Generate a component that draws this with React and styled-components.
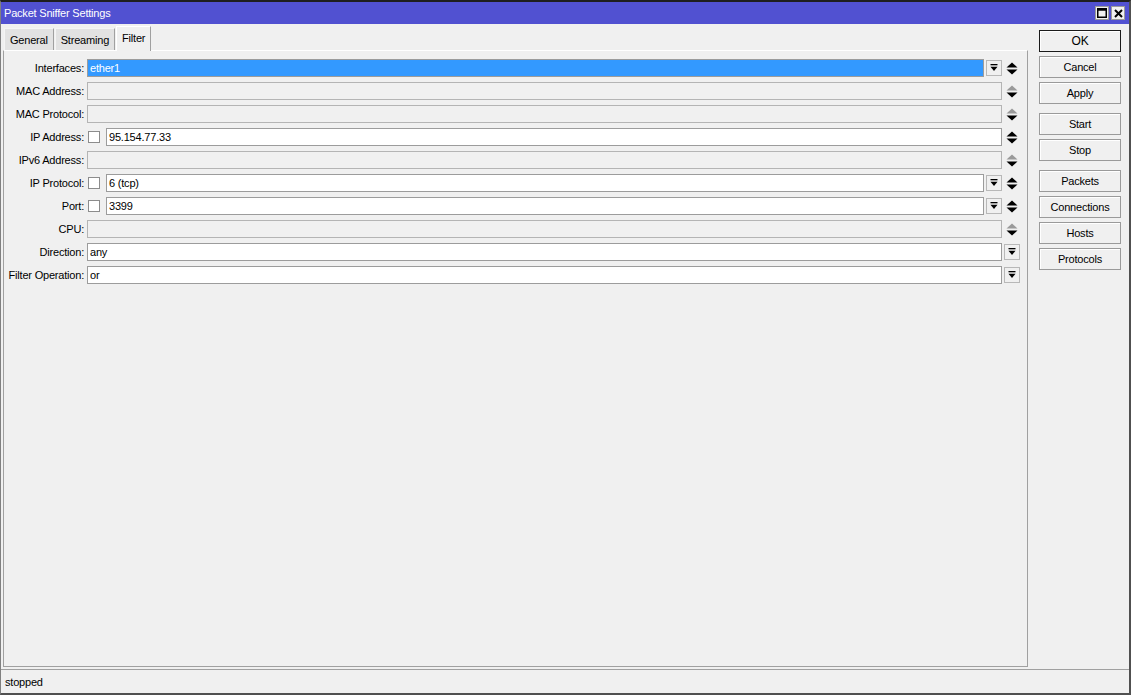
import React from "react";
import styled, { createGlobalStyle } from "styled-components";

const GlobalStyle = createGlobalStyle`
  html, body {
    margin: 0;
    padding: 0;
    background: #ffffff;
  }
  body {
    font-family: "Liberation Sans", Arial, sans-serif;
    font-size: 11px;
    letter-spacing: -0.2px;
    color: #000;
  }
`;

const Window = styled.div`
  box-sizing: border-box;
  width: 1131px;
  height: 695px;
  display: flex;
  flex-direction: column;
  background: #f0f0f0;
  border-top: 2px solid #1e1e1e;
  border-left: 1px solid #808080;
  border-right: 2px solid #505050;
  border-bottom: 2px solid #505050;
`;

const TitleBar = styled.div`
  height: 22px;
  flex-shrink: 0;
  display: flex;
  align-items: center;
  justify-content: space-between;
  padding: 0 4px 0 3px;
  background: #5151d1;
  color: #fff;
  font-size: 11px;
`;

const TitleButtons = styled.div`
  display: flex;
  gap: 2px;
`;

const TitleButton = styled.div`
  width: 14px;
  height: 14px;
  box-sizing: border-box;
  background: #f0f0f0;
  border: 1px solid #9a9a9a;
  display: flex;
  align-items: center;
  justify-content: center;
`;

const Body = styled.div`
  flex: 1;
  display: flex;
  min-height: 0;
`;

const Left = styled.div`
  flex: 1;
  display: flex;
  flex-direction: column;
  padding: 3px 0 0 2px;
  min-width: 0;
`;

const Tabs = styled.div`
  height: 23px;
  display: flex;
  align-items: flex-end;
  padding-left: 1px;
  gap: 1px;
`;

const Tab = styled.div`
  box-sizing: border-box;
  height: ${(p) => (p.$active ? "25px" : "22px")};
  padding: 0 5px;
  display: flex;
  align-items: center;
  padding-bottom: ${(p) => (p.$active ? "3px" : "0")};
  background: ${(p) => (p.$active ? "#f0f0f0" : "#e2e2e2")};
  border: 1px solid ${(p) => (p.$active ? "#ffffff" : "#f4f4f4")};
  border-right-color: #a0a0a0;
  border-bottom: none;
  margin-bottom: ${(p) => (p.$active ? "-1px" : "0")};
  position: relative;
  z-index: ${(p) => (p.$active ? 1 : 0)};
`;

const Panel = styled.div`
  flex: 1;
  box-sizing: border-box;
  border: 1px solid #a0a0a0;
  border-top-color: #ffffff;
  display: flex;
  flex-direction: column;
  gap: 5px;
  padding: 8px 7px 0 0;
`;

const Row = styled.div`
  display: flex;
  align-items: center;
  height: 18px;
`;

const Label = styled.div`
  width: 80px;
  flex-shrink: 0;
  text-align: right;
  white-space: nowrap;
  padding-right: 3px;
`;

const Main = styled.div`
  flex: 1;
  display: flex;
  align-items: center;
  gap: 2px;
  min-width: 0;
`;

const Check = styled.div`
  width: 12px;
  height: 12px;
  box-sizing: border-box;
  background: #fff;
  border: 1px solid #8c8c8c;
  margin: 0 4px 0 1px;
  flex-shrink: 0;
`;

const Field = styled.div`
  flex: 1;
  box-sizing: border-box;
  height: 18px;
  display: flex;
  align-items: center;
  padding-left: 2px;
  border: 1px solid ${(p) => (p.$disabled ? "#b4b4b4" : "#9c9c9c")};
  background: ${(p) =>
    p.$selected ? "#3399ff" : p.$disabled ? "#f0f0f0" : "#ffffff"};
  color: ${(p) => (p.$selected ? "#ffffff" : "#000")};
  white-space: nowrap;
  overflow: hidden;
`;

const DropButton = styled.div`
  width: 16px;
  height: 16px;
  box-sizing: border-box;
  flex-shrink: 0;
  background: #f0f0f0;
  border: 1px solid #b8b8b8;
  display: flex;
  align-items: center;
  justify-content: center;
`;

const Trail = styled.div`
  width: 16px;
  margin-left: 2px;
  flex-shrink: 0;
  display: flex;
  justify-content: center;
`;

const Side = styled.div`
  width: 101px;
  flex-shrink: 0;
  display: flex;
  flex-direction: column;
  padding: 6px 0 0 11px;
  box-sizing: border-box;
`;

const Group = styled.div`
  display: flex;
  flex-direction: column;
  gap: 4px;
  margin-bottom: 9px;
`;

const Button = styled.div`
  width: 82px;
  height: 22px;
  box-sizing: border-box;
  display: flex;
  align-items: center;
  justify-content: center;
  background: #f0f0f0;
  border: 1px solid ${(p) => (p.$default ? "#1a1a1a" : "#9a9a9a")};
  box-shadow: inset 1px 1px 0 #ffffff;
  font-size: ${(p) => (p.$default ? "12px" : "11px")};
`;

const Status = styled.div`
  height: 24px;
  flex-shrink: 0;
  box-sizing: border-box;
  margin-top: 2px;
  border-top: 1px solid #a0a0a0;
  display: flex;
  align-items: center;
  padding-left: 4px;
`;

const DropIcon = () => (
  <svg width="8" height="8" viewBox="0 0 8 8">
    <rect x="0.5" y="0" width="7" height="1.3" fill="#000" />
    <path d="M0.5 2.8 H7.5 L4 7 Z" fill="#000" />
  </svg>
);

const Spin = ({ dim }) => (
  <svg width="12" height="13" viewBox="0 0 12 13">
    <path d="M6 0.5 L11.5 5.5 H0.5 Z" fill={dim ? "#9a9a9a" : "#000"} />
    <path d="M0.5 7.5 H11.5 L6 12.5 Z" fill="#000" />
  </svg>
);

const rows = [
  { label: "Interfaces:", value: "ether1", selected: true, drop: true, spin: true },
  { label: "MAC Address:", disabled: true, spin: true, dim: true },
  { label: "MAC Protocol:", disabled: true, spin: true, dim: true },
  { label: "IP Address:", value: "95.154.77.33", check: true, spin: true },
  { label: "IPv6 Address:", disabled: true, spin: true, dim: true },
  { label: "IP Protocol:", value: "6 (tcp)", check: true, drop: true, spin: true },
  { label: "Port:", value: "3399", check: true, drop: true, spin: true },
  { label: "CPU:", disabled: true, spin: true, dim: true },
  { label: "Direction:", value: "any", dropTrail: true },
  { label: "Filter Operation:", value: "or", dropTrail: true },
];

const buttonGroups = [
  ["OK", "Cancel", "Apply"],
  ["Start", "Stop"],
  ["Packets", "Connections", "Hosts", "Protocols"],
];

export default function App() {
  return (
    <>
      <GlobalStyle />
      <Window>
        <TitleBar>
          <span>Packet Sniffer Settings</span>
          <TitleButtons>
            <TitleButton>
              <svg width="10" height="10" viewBox="0 0 10 10">
                <rect x="0.75" y="0.75" width="8.5" height="8.5" fill="none" stroke="#000" strokeWidth="1.5" />
                <rect x="0.75" y="0.75" width="8.5" height="2" fill="#000" />
              </svg>
            </TitleButton>
            <TitleButton>
              <svg width="9" height="9" viewBox="0 0 9 9">
                <path d="M1 1 L8 8 M8 1 L1 8" stroke="#000" strokeWidth="2" />
              </svg>
            </TitleButton>
          </TitleButtons>
        </TitleBar>
        <Body>
          <Left>
            <Tabs>
              <Tab>General</Tab>
              <Tab>Streaming</Tab>
              <Tab $active>Filter</Tab>
            </Tabs>
            <Panel>
              {rows.map((r) => (
                <Row key={r.label}>
                  <Label>{r.label}</Label>
                  <Main>
                    {r.check && <Check />}
                    <Field $disabled={r.disabled} $selected={r.selected}>
                      {r.value}
                    </Field>
                    {r.drop && (
                      <DropButton>
                        <DropIcon />
                      </DropButton>
                    )}
                  </Main>
                  <Trail>
                    {r.spin && <Spin dim={r.dim} />}
                    {r.dropTrail && (
                      <DropButton>
                        <DropIcon />
                      </DropButton>
                    )}
                  </Trail>
                </Row>
              ))}
            </Panel>
          </Left>
          <Side>
            {buttonGroups.map((g, i) => (
              <Group key={i}>
                {g.map((b) => (
                  <Button key={b} $default={b === "OK"}>
                    {b}
                  </Button>
                ))}
              </Group>
            ))}
          </Side>
        </Body>
        <Status>stopped</Status>
      </Window>
    </>
  );
}
